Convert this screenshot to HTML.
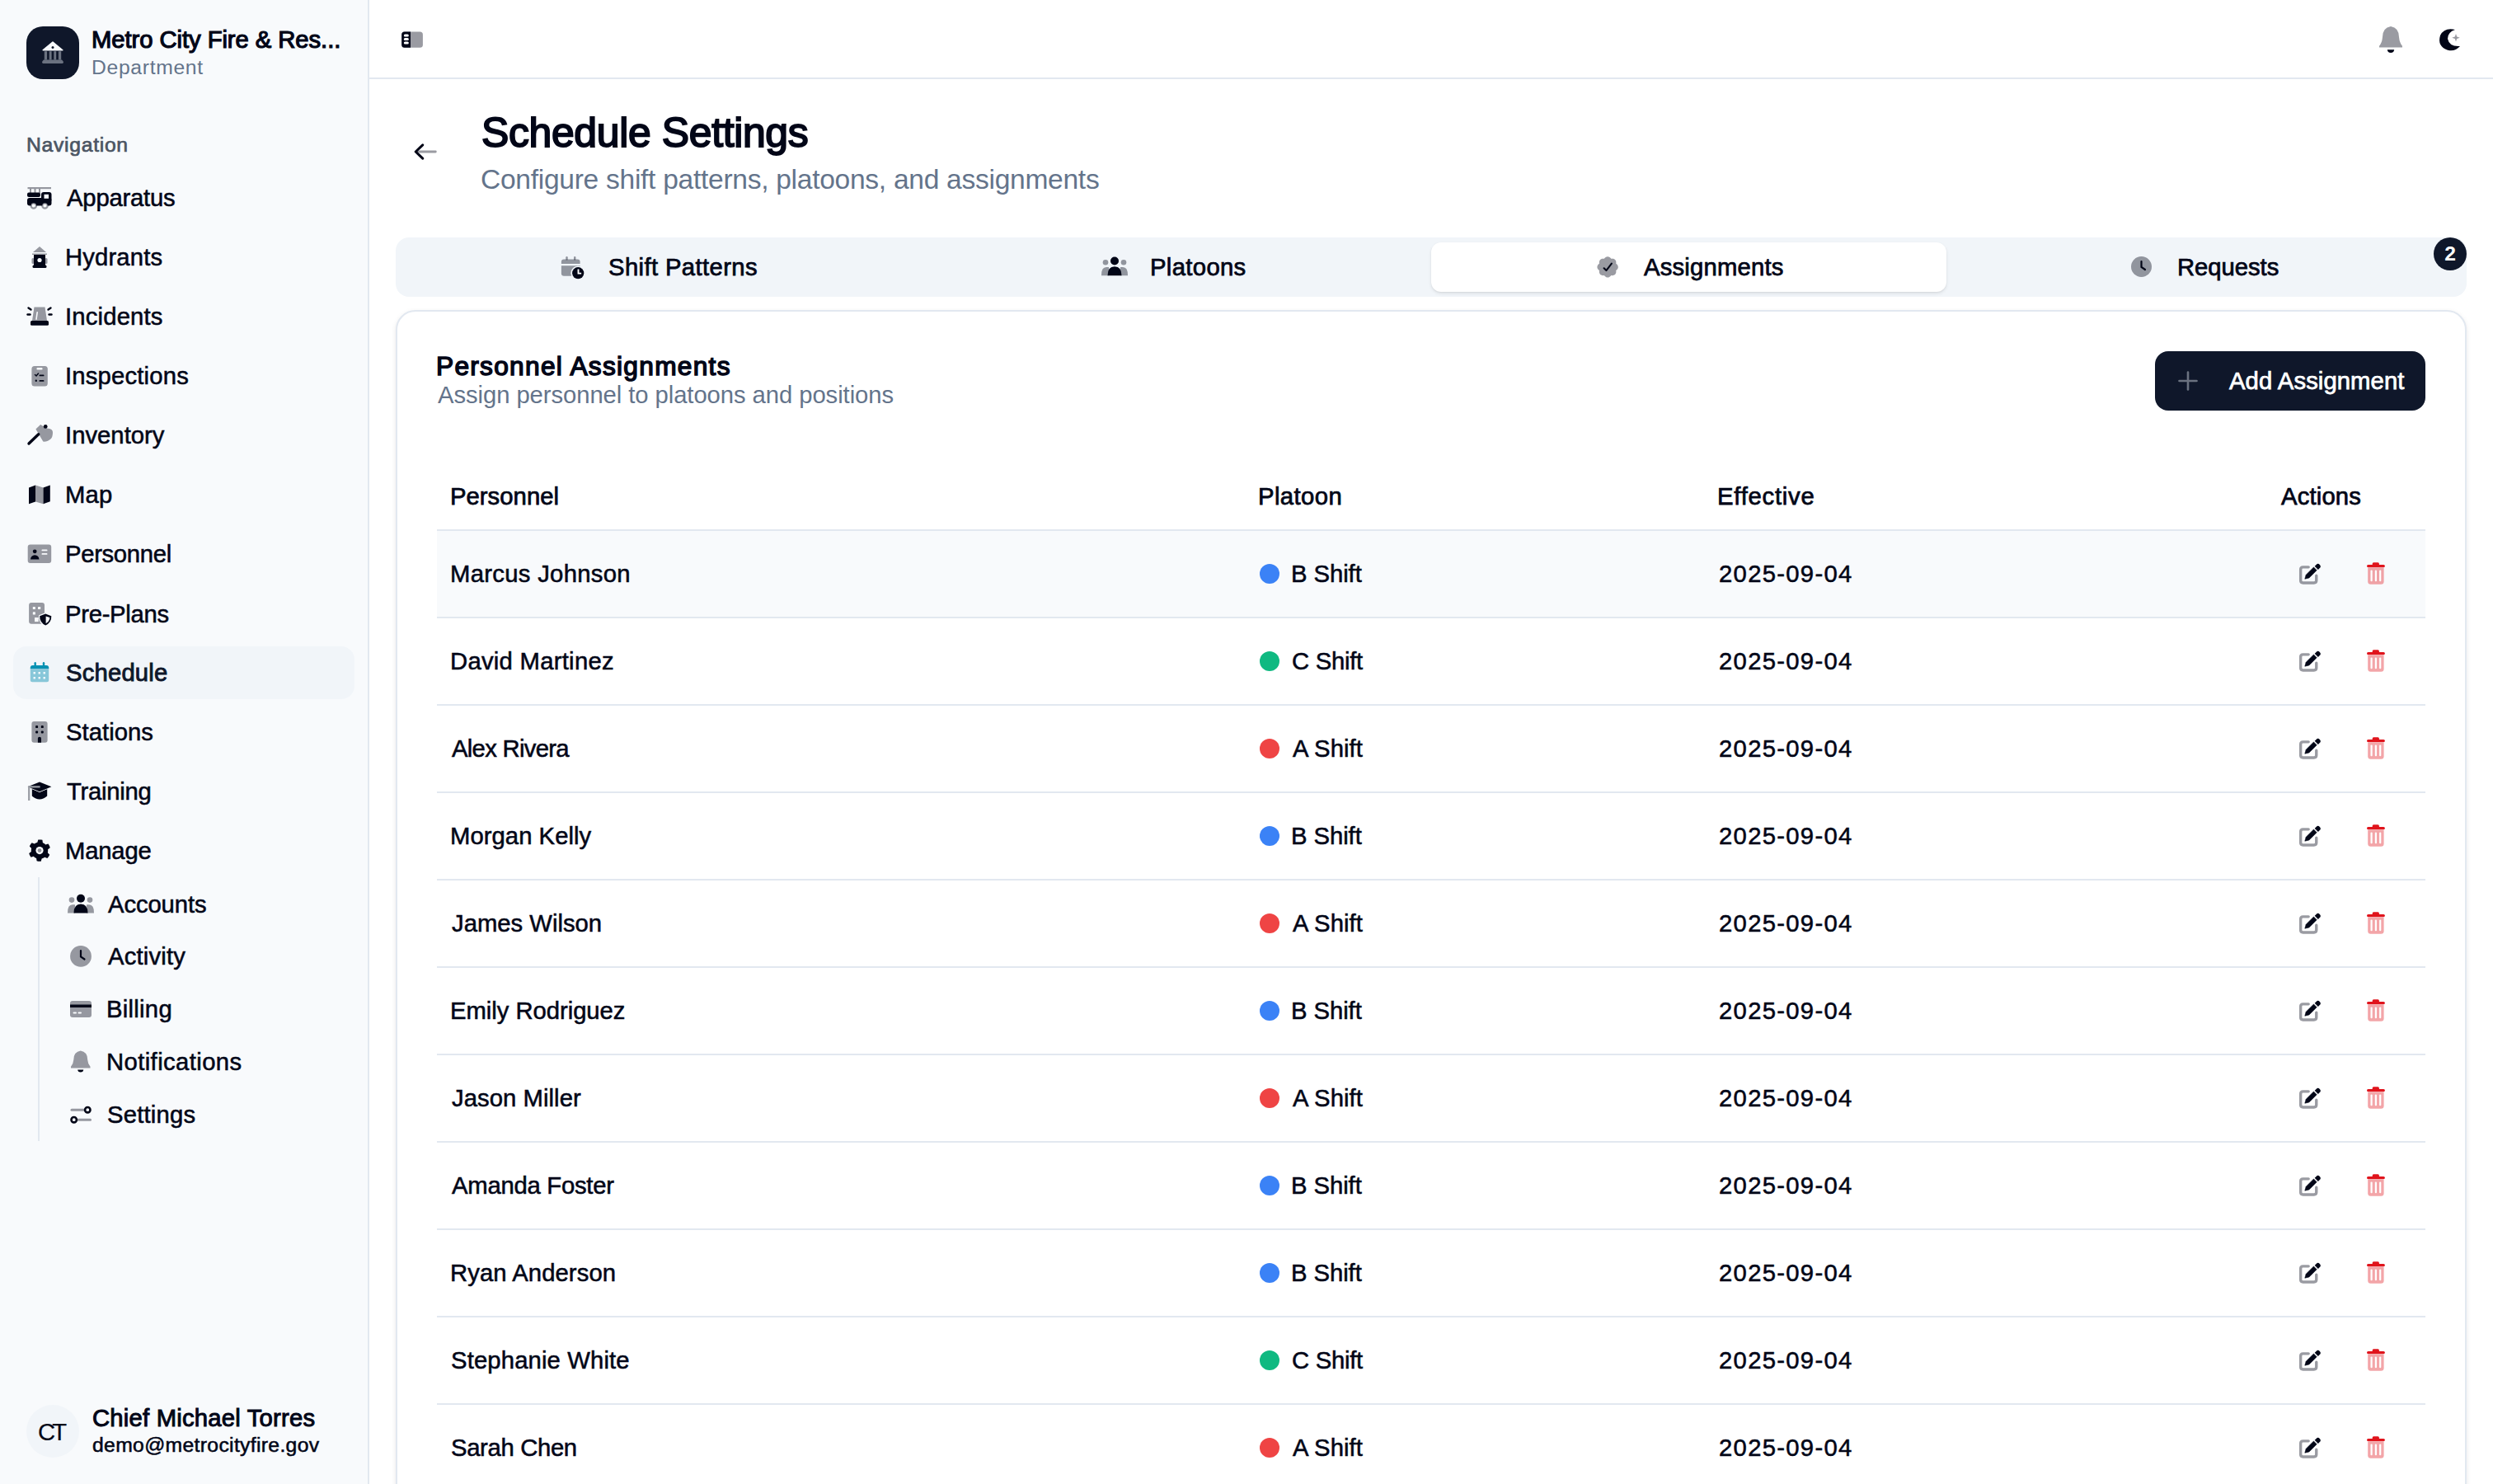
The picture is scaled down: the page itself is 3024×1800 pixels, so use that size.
<!DOCTYPE html>
<html><head><meta charset='utf-8'><title>Schedule Settings</title>
<style>
html,body{margin:0;padding:0;background:#ffffff;}
body{width:3024px;height:1800px;overflow:hidden;position:relative;font-family:"Liberation Sans",sans-serif;}
.t{position:absolute;white-space:nowrap;}
.sb{position:absolute;left:0;top:0;width:446px;height:1800px;background:#f8fafc;border-right:2px solid #e2e8f0;}
.topline{position:absolute;left:448px;top:94px;width:2576px;height:2px;background:#e2e8f0;}
.logo{position:absolute;left:32px;top:32px;width:64px;height:64px;border-radius:20px;background:#0f172a;}
.active{position:absolute;left:16px;top:784px;width:414px;height:64px;border-radius:16px;background:#f1f5f9;}
.avatar{position:absolute;left:32px;top:1704px;width:64px;height:64px;border-radius:50%;background:#f1f5f9;}
.tabbar{position:absolute;left:480px;top:288px;width:2512px;height:72px;border-radius:16px;background:#f1f5f9;}
.tabact{position:absolute;left:1736px;top:294px;width:625px;height:60px;border-radius:12px;background:#ffffff;box-shadow:0 2px 4px rgba(0,0,0,0.08),0 1px 2px rgba(0,0,0,0.06);}
.card{position:absolute;left:480px;top:376px;width:2508px;height:1500px;border:2px solid #e2e8f0;border-radius:24px;background:#ffffff;box-shadow:0 2px 6px rgba(0,0,0,0.08),0 2px 4px -2px rgba(0,0,0,0.08);}
.btn{position:absolute;left:2614px;top:426px;width:328px;height:72px;border-radius:16px;background:#0f172a;}
.hover{position:absolute;left:530px;top:643.6px;width:2412px;height:104px;background:#f8fafc;}
.hl{position:absolute;left:530px;width:2412px;height:2px;background:#e2e8f0;}
.ov{position:absolute;left:0;top:0;}
</style></head><body>
<div class='sb'></div>
<div class='topline'></div>
<div class='logo'></div>
<div class='active'></div>
<div class='avatar'></div>
<div class='tabbar'></div>
<div class='tabact'></div>
<div class='card'></div>
<div class='hover'></div>
<div class='hl' style='top:641.6px'></div><div class='hl' style='top:747.6px'></div><div class='hl' style='top:853.6px'></div><div class='hl' style='top:959.6px'></div><div class='hl' style='top:1065.6px'></div><div class='hl' style='top:1171.6px'></div><div class='hl' style='top:1277.6px'></div><div class='hl' style='top:1383.6px'></div><div class='hl' style='top:1489.6px'></div><div class='hl' style='top:1595.6px'></div><div class='hl' style='top:1701.6px'></div><div class='hl' style='top:1807.6px'></div>
<div class='btn'></div>
<svg class='ov' width='3024' height='1800' viewBox='0 0 3024 1800'><path d='M52.2 60.8 L64 51.2 L75.8 60.8 Z' fill='#f8fafc' stroke='#f8fafc' stroke-width='1.6' stroke-linejoin='round'/><circle cx='64' cy='57.6' r='1.5' fill='#0f172a' /><rect x='53.8' y='62.2' width='3.3' height='10.4' rx='0' fill='#6b7280' /><rect x='59.7' y='62.2' width='2.9' height='10.4' rx='0' fill='#6b7280' /><rect x='65.3' y='62.2' width='2.9' height='10.4' rx='0' fill='#6b7280' /><rect x='70.9' y='62.2' width='3.3' height='10.4' rx='0' fill='#6b7280' /><path d='M53 72.6 L75 72.6 Q77 74.5 77 75.6 Q77 77 75.6 77 L52.4 77 Q51 77 51 75.6 Q51 74.5 53 72.6 Z' fill='#6b7280' /><rect x='33.5' y='227' width='28.5' height='2.2' rx='0' fill='rgba(2,6,23,0.4)' /><rect x='36' y='229' width='2' height='5' rx='0' fill='rgba(2,6,23,0.4)' /><rect x='41.5' y='229' width='2' height='5' rx='0' fill='rgba(2,6,23,0.4)' /><rect x='47' y='229' width='2' height='5' rx='0' fill='rgba(2,6,23,0.4)' /><rect x='33' y='233.5' width='16' height='5.5' rx='2' fill='#020617' /><rect x='33' y='240' width='29.5' height='9.5' rx='3' fill='#020617' /><rect x='50' y='233' width='12.5' height='12' rx='3' fill='#020617' /><rect x='53.5' y='235.8' width='5.5' height='5' rx='0' fill='#f8fafc' /><circle cx='40.8' cy='249.5' r='3.2' fill='#f8fafc' stroke='rgba(2,6,23,0.4)' stroke-width='2.2'/><circle cx='54.5' cy='249.5' r='3.2' fill='#f8fafc' stroke='rgba(2,6,23,0.4)' stroke-width='2.2'/><path d='M48 299 L56 306 L40 306 Z' fill='rgba(2,6,23,0.4)' /><rect x='39' y='307.5' width='18' height='1.5' rx='0' fill='rgba(2,6,23,0.4)' /><rect x='38.5' y='313' width='3' height='7' rx='1.5' fill='rgba(2,6,23,0.4)' /><rect x='54.5' y='313' width='3' height='7' rx='1.5' fill='rgba(2,6,23,0.4)' /><rect x='41' y='309' width='14' height='13.5' rx='0' fill='#020617' /><rect x='39.5' y='321.5' width='17' height='3.5' rx='1.5' fill='#020617' /><circle cx='48' cy='315.5' r='2.6' fill='#f8fafc' /><path d='M41.5 372.6 L54.5 372.6 L57 389 L39 389 Z' fill='rgba(2,6,23,0.4)' stroke-linejoin='round'/><rect x='43.8' y='378' width='1.6' height='10' rx='0.8' fill='#f8fafc' transform='rotate(8 44.6 383)'/><rect x='37' y='389' width='22' height='5.8' rx='1.5' fill='#020617' /><g stroke='#020617' stroke-width='2.4' stroke-linecap='round'><line x1='33.5' y1='381.5' x2='36.5' y2='381.5'/><line x1='59.5' y1='381.5' x2='62.5' y2='381.5'/><line x1='34.5' y1='373.5' x2='37.5' y2='375.5'/><line x1='61.5' y1='373.5' x2='58.5' y2='375.5'/></g><rect x='38.4' y='444' width='19.4' height='24.6' rx='3.5' fill='rgba(2,6,23,0.4)' /><rect x='44.5' y='446' width='7' height='2.5' rx='1.2' fill='#f8fafc' /><path d='M42.5 454.5 L44 456 L46.5 453' fill='none' stroke='#020617' stroke-width='1.5' stroke-linecap='round'/><rect x='47.5' y='454.5' width='6' height='1.8' rx='0.9' fill='#020617' /><rect x='47.5' y='461' width='6' height='1.8' rx='0.9' fill='#020617' /><circle cx='43.8' cy='461.8' r='1.2' fill='#020617' /><path d='M43.4 520.6 L49.1 515 L56.8 519.4 Q64.5 519.5 64 525 Q63.8 530 62 532 Q58 536 52.3 535.6 L47.9 527.9 Z' fill='rgba(2,6,23,0.4)' /><line x1='35' y1='538' x2='46.7' y2='526.7' stroke='#020617' stroke-width='3.4' stroke-linecap='round'/><circle cx='55.2' cy='517.4' r='2.4' fill='#020617' /><path d='M35 591.5 L43 588.5 L43 608.5 L35 611.2 Z' fill='#020617' /><path d='M43 588.5 L52.5 591.5 L52.5 611.2 L43 608.5 Z' fill='rgba(2,6,23,0.4)' /><path d='M52.5 591.5 L60.8 588.5 L60.8 608.2 L52.5 611.2 Z' fill='#020617' /><rect x='33.7' y='660.6' width='28.5' height='22.4' rx='3' fill='rgba(2,6,23,0.4)' /><circle cx='42.2' cy='668.8' r='2.4' fill='#020617' /><path d='M37 678.4 Q37.5 673.5 42.2 673.2 Q47 673.5 47.5 678.4 Z' fill='#020617' /><rect x='50.5' y='666.5' width='7' height='1.8' rx='0.9' fill='#f8fafc' /><rect x='50.5' y='671' width='7' height='1.8' rx='0.9' fill='#f8fafc' /><rect x='35.1' y='731.1' width='18.9' height='25.7' rx='3' fill='rgba(2,6,23,0.4)' /><rect x='39.8' y='736' width='3.1' height='3' rx='0.6' fill='#f8fafc' /><rect x='46' y='736' width='3.2' height='3' rx='0.6' fill='#f8fafc' /><rect x='39.8' y='742.3' width='3.1' height='3.2' rx='0.6' fill='#f8fafc' /><rect x='42' y='749' width='4.7' height='5.1' rx='0' fill='#f8fafc' /><path d='M55.25 744.5 L62.3 747.2 Q62.6 754.8 55.25 758.6 Q47.9 754.8 48.2 747.2 Z' fill='#020617' stroke='#f8fafc' stroke-width='2.6' stroke-linejoin='round' paint-order='stroke'/><path d='M55.6 747.4 L60.4 749.1 Q60.2 754 55.6 756.2 Z' fill='#f8fafc' /><rect x='36.8' y='807' width='22.4' height='20.2' rx='2.5' fill='rgba(8,145,178,0.45)' /><path d='M36.8 810.5 Q36.8 807 40 807 L56 807 Q59.2 807 59.2 810.5 L59.2 811 L36.8 811 Z' fill='#0891b2' /><rect x='41.5' y='803' width='2.4' height='5' rx='1.2' fill='#0891b2' /><rect x='51.8' y='803' width='2.4' height='5' rx='1.2' fill='#0891b2' /><rect x='40.5' y='815' width='2.5' height='2.5' rx='0' fill='#eef7fb' /><rect x='46.5' y='815' width='2.5' height='2.5' rx='0' fill='#eef7fb' /><rect x='52.5' y='815' width='2.5' height='2.5' rx='0' fill='#eef7fb' /><rect x='40.5' y='821' width='2.5' height='2.5' rx='0' fill='#eef7fb' /><rect x='46.5' y='821' width='2.5' height='2.5' rx='0' fill='#eef7fb' /><rect x='52.5' y='821' width='2.5' height='2.5' rx='0' fill='#eef7fb' /><rect x='38.4' y='875' width='19.2' height='25.7' rx='3' fill='rgba(2,6,23,0.4)' /><rect x='43.1' y='880.1' width='3' height='3' rx='0.9' fill='#020617' /><rect x='43.1' y='886.5' width='3' height='3' rx='0.9' fill='#020617' /><rect x='49.8' y='880.1' width='3' height='3' rx='0.9' fill='#020617' /><rect x='49.8' y='886.5' width='3' height='3' rx='0.9' fill='#020617' /><path d='M45.9 900.7 L45.9 895.8 Q45.9 893.7 47.95 893.7 Q50 893.7 50 895.8 L50 900.7 Z' fill='#020617' /><path d='M38.8 957 L48 961 L57.2 957 L57.2 965.5 Q48 973.5 38.8 965.5 Z' fill='#020617' /><path d='M48 948.4 L62.4 954.2 L48 960.2 L33.6 954.2 Z' fill='#020617' stroke='#f8fafc' stroke-width='1.4' stroke-linejoin='round' paint-order='stroke'/><path d='M48.6 954.4 L35.2 954.4 L35.2 971' fill='none' stroke='#9b9ea6' stroke-width='2.3'/><path d='M48.00 1018.40 L49.72 1018.51 L51.42 1018.85 L51.90 1022.18 L53.10 1022.77 L54.21 1023.51 L55.21 1024.39 L58.47 1023.56 L59.43 1025.00 L60.20 1026.55 L60.75 1028.18 L58.11 1030.27 L58.20 1031.60 L58.11 1032.93 L57.85 1034.24 L60.20 1036.65 L59.43 1038.20 L58.47 1039.64 L57.33 1040.93 L54.21 1039.69 L53.10 1040.43 L51.90 1041.02 L50.64 1041.45 L49.72 1044.69 L48.00 1044.80 L46.28 1044.69 L44.58 1044.35 L44.10 1041.02 L42.90 1040.43 L41.79 1039.69 L40.79 1038.81 L37.53 1039.64 L36.57 1038.20 L35.80 1036.65 L35.25 1035.02 L37.89 1032.93 L37.80 1031.60 L37.89 1030.27 L38.15 1028.96 L35.80 1026.55 L36.57 1025.00 L37.53 1023.56 L38.67 1022.27 L41.79 1023.51 L42.90 1022.77 L44.10 1022.18 L45.36 1021.75 L46.28 1018.51 Z' fill='#020617' stroke-linejoin='round'/><circle cx='48' cy='1031.6' r='4.6' fill='#f8fafc' /><circle cx='48' cy='1031.6' r='2.4' fill='rgba(2,6,23,0.4)' /><rect x='46' y='1064' width='2' height='320' rx='0' fill='#e2e8f0' /><circle cx='87.0' cy='1091.6' r='3.3' fill='rgba(2,6,23,0.4)' /><circle cx='109.0' cy='1091.6' r='3.3' fill='rgba(2,6,23,0.4)' /><path d='M82.0 1107.6 Q81.8 1097.3 88.0 1097.3 L91.0 1097.3 L91.0 1107.6 Z' fill='rgba(2,6,23,0.4)' /><path d='M114.0 1107.6 Q114.2 1097.3 108.0 1097.3 L105.0 1097.3 L105.0 1107.6 Z' fill='rgba(2,6,23,0.4)' /><circle cx='98' cy='1089.8' r='5.0' fill='#020617' /><path d='M89.5 1107.6 Q89.5 1096.6 98 1096.6 Q106.5 1096.6 106.5 1107.6 Z' fill='#020617' /><circle cx='98' cy='1159.9' r='12.9' fill='rgba(2,6,23,0.4)' /><path d='M98 1153 L98 1160.5 L102.5 1163.5' fill='none' stroke='#020617' stroke-width='2.2' stroke-linecap='round'/><rect x='85' y='1214' width='26' height='20' rx='3' fill='rgba(2,6,23,0.4)' /><rect x='85' y='1218.5' width='26' height='3.5' rx='0' fill='#020617' /><rect x='88.5' y='1227.5' width='4.5' height='2' rx='1' fill='#f8fafc' /><rect x='94.5' y='1227.5' width='4.5' height='2' rx='1' fill='#f8fafc' /><path d='M97.75 1274.6 Q106.21 1275.8999999999999 106.21 1285.52 Q106.68 1290.7199999999998 109.5 1293.84 L109.5 1295.3999999999999 L86 1295.3999999999999 L86 1293.84 Q88.82 1290.7199999999998 89.29 1285.52 Q89.29 1275.8999999999999 97.75 1274.6 Z' fill='rgba(2,6,23,0.4)' stroke-linejoin='round'/><path d='M94.225 1297.61 L101.275 1297.61 Q101.04 1300.6 97.75 1300.6 Q94.46 1300.6 94.225 1297.61 Z' fill='#020617' /><g fill='none' stroke-linecap='round'><line x1='87' y1='1346.3' x2='101.5' y2='1346.3' stroke='rgba(2,6,23,0.4)' stroke-width='3'/><line x1='95' y1='1358.3' x2='109.5' y2='1358.3' stroke='rgba(2,6,23,0.4)' stroke-width='3'/><circle cx='106.3' cy='1346.2' r='3.2' stroke='#020617' stroke-width='2.6' fill='#f8fafc'/><circle cx='89.7' cy='1358.2' r='3.2' stroke='#020617' stroke-width='2.6' fill='#f8fafc'/></g><rect x='487.2' y='38.4' width='25.7' height='19.4' rx='3.5' fill='rgba(2,6,23,0.4)' /><path d='M490.7 38.4 L498 38.4 L498 57.8 L490.7 57.8 Q487.2 57.8 487.2 54.3 L487.2 41.9 Q487.2 38.4 490.7 38.4 Z' fill='#020617' /><rect x='489.8' y='41.5' width='6' height='3' rx='1.5' fill='#ffffff' /><rect x='489.8' y='46' width='6' height='3' rx='1.5' fill='#ffffff' /><rect x='489.8' y='50.5' width='6' height='3' rx='1.5' fill='#ffffff' /><path d='M2900.0 32 Q2910.08 33.6 2910.08 45.44 Q2910.64 51.84 2914 55.68 L2914 57.6 L2886 57.6 L2886 55.68 Q2889.36 51.84 2889.92 45.44 Q2889.92 33.6 2900.0 32 Z' fill='rgba(2,6,23,0.4)' stroke-linejoin='round'/><path d='M2895.8 60.32 L2904.2 60.32 Q2903.92 64.0 2900.0 64.0 Q2896.08 64.0 2895.8 60.32 Z' fill='#020617' /><path d='M2978 36 Q2965 33 2960 43 Q2956 56 2969 60.8 Q2978 63 2984 56 Q2971 57 2969 47 Q2969 39 2978 36 Z' fill='#020617' /><path d='M2979 41 L2980.2 44.6 L2983.8 45.8 L2980.2 47 L2979 50.6 L2977.8 47 L2974.2 45.8 L2977.8 44.6 Z' fill='rgba(2,6,23,0.4)' /><line x1='507' y1='184' x2='528.3' y2='184' stroke='rgba(2,6,23,0.4)' stroke-width='2.9' stroke-linecap='round'/><path d='M512.7 175.8 L504.2 184 L512.7 192.2' fill='none' stroke='#020617' stroke-width='3.0' stroke-linecap='round' stroke-linejoin='round'/><path d='M680.9 319.9 L680.9 317.6 Q680.9 314.4 684.1 314.4 L700.4 314.4 Q703.6 314.4 703.6 317.6 L703.6 319.9 Z' fill='rgba(2,6,23,0.4)' /><path d='M680.9 322.3 L703.6 322.3 L703.6 334.7 L684.1 334.7 Q680.9 334.7 680.9 331.5 Z' fill='rgba(2,6,23,0.4)' /><rect x='686.3' y='311.1' width='2.4' height='4.5' rx='1.2' fill='rgba(2,6,23,0.4)' /><rect x='696' y='311.1' width='2.4' height='4.5' rx='1.2' fill='rgba(2,6,23,0.4)' /><circle cx='701.2' cy='331.2' r='8.8' fill='#f1f5f9' /><circle cx='701.2' cy='331.2' r='7.1' fill='#020617' /><path d='M701.5 327.4 L701.5 331.6 L704.2 331.6' fill='none' stroke='#ffffff' stroke-width='1.9' stroke-linecap='square'/><circle cx='1341.0' cy='318.3' r='3.3' fill='rgba(2,6,23,0.4)' /><circle cx='1363.0' cy='318.3' r='3.3' fill='rgba(2,6,23,0.4)' /><path d='M1336.0 334.3 Q1335.8 324.0 1342.0 324.0 L1345.0 324.0 L1345.0 334.3 Z' fill='rgba(2,6,23,0.4)' /><path d='M1368.0 334.3 Q1368.2 324.0 1362.0 324.0 L1359.0 324.0 L1359.0 334.3 Z' fill='rgba(2,6,23,0.4)' /><circle cx='1352' cy='316.5' r='5.0' fill='#020617' /><path d='M1343.5 334.3 Q1343.5 323.3 1352 323.3 Q1360.5 323.3 1360.5 334.3 Z' fill='#020617' /><path d='M1950.10 311.20 L1951.33 311.39 L1952.48 311.93 L1953.48 312.75 L1954.31 313.74 L1955.59 313.63 L1956.88 313.75 L1958.07 314.18 L1959.08 314.92 L1959.82 315.93 L1960.25 317.12 L1960.37 318.41 L1960.26 319.69 L1961.25 320.52 L1962.07 321.52 L1962.61 322.67 L1962.80 323.90 L1962.61 325.13 L1962.07 326.28 L1961.25 327.28 L1960.26 328.11 L1960.37 329.39 L1960.25 330.68 L1959.82 331.87 L1959.08 332.88 L1958.07 333.62 L1956.88 334.05 L1955.59 334.17 L1954.31 334.06 L1953.48 335.05 L1952.48 335.87 L1951.33 336.41 L1950.10 336.60 L1948.87 336.41 L1947.72 335.87 L1946.72 335.05 L1945.89 334.06 L1944.61 334.17 L1943.32 334.05 L1942.13 333.62 L1941.12 332.88 L1940.38 331.87 L1939.95 330.68 L1939.83 329.39 L1939.94 328.11 L1938.95 327.28 L1938.13 326.28 L1937.59 325.13 L1937.40 323.90 L1937.59 322.67 L1938.13 321.52 L1938.95 320.52 L1939.94 319.69 L1939.83 318.41 L1939.95 317.12 L1940.38 315.93 L1941.12 314.92 L1942.13 314.18 L1943.32 313.75 L1944.61 313.63 L1945.89 313.74 L1946.72 312.75 L1947.72 311.93 L1948.87 311.39 Z' fill='rgba(2,6,23,0.4)' /><path d='M1945.6 325.3 L1948.4 328.1 L1954.9 319.6' fill='none' stroke='#020617' stroke-width='2.1' stroke-linecap='round' stroke-linejoin='round'/><circle cx='2597.5' cy='323.5' r='12.5' fill='rgba(2,6,23,0.4)' /><path d='M2597.5 317 L2597.5 324 L2602 327' fill='none' stroke='#020617' stroke-width='2.2' stroke-linecap='round'/><circle cx='2972' cy='308' r='20' fill='#0f172a' /><g stroke='#6b7280' stroke-width='2.6' stroke-linecap='round'><line x1='2654' y1='451.5' x2='2654' y2='472.5'/><line x1='2643.5' y1='462' x2='2664.5' y2='462'/></g><circle cx='1540' cy='696' r='12' fill='#3b82f6' /><g transform='translate(0 0)'><path d='M2800.2 687.85 L2793.6 687.85 Q2790.65 687.85 2790.65 690.8 L2790.65 704 Q2790.65 706.95 2793.6 706.95 L2806.8 706.95 Q2809.75 706.95 2809.75 704 L2809.75 698.3' fill='none' stroke='rgba(2,6,23,0.4)' stroke-width='3.4' stroke-linecap='round'/><path d='M2795.8 702.2 L2797.2 697.3 L2806.5 688 L2810.2 691.7 L2800.9 701 Z' fill='#020617' stroke='#020617' stroke-width='0.6' stroke-linejoin='round'/><path d='M2807.7 686.8 L2809.6 684.9 Q2811.7 682.8 2813.8 684.9 Q2815.9 687 2813.8 689.1 L2811.9 691 Z' fill='#020617'/><path d='M2872.2 688.7 L2891.6 688.7 L2891.6 705.2 Q2891.6 708.7 2888.1 708.7 L2875.7 708.7 Q2872.2 708.7 2872.2 705.2 Z' fill='rgba(225,29,38,0.4)' stroke='rgba(225,29,38,0.4)' stroke-width='0'/><rect x='2871' y='684.9' width='21.9' height='3.3' rx='1.6' fill='#e0141c'/><rect x='2877.7' y='682.2' width='8.2' height='3.5' rx='1.5' fill='#e0141c'/><rect x='2875.5' y='691.4' width='2.2' height='13.9' rx='1.1' fill='#fff'/><rect x='2880.8' y='691.4' width='2.2' height='13.9' rx='1.1' fill='#fff'/><rect x='2886.1' y='691.4' width='2.2' height='13.9' rx='1.1' fill='#fff'/></g><circle cx='1540' cy='802' r='12' fill='#10b981' /><g transform='translate(0 106)'><path d='M2800.2 687.85 L2793.6 687.85 Q2790.65 687.85 2790.65 690.8 L2790.65 704 Q2790.65 706.95 2793.6 706.95 L2806.8 706.95 Q2809.75 706.95 2809.75 704 L2809.75 698.3' fill='none' stroke='rgba(2,6,23,0.4)' stroke-width='3.4' stroke-linecap='round'/><path d='M2795.8 702.2 L2797.2 697.3 L2806.5 688 L2810.2 691.7 L2800.9 701 Z' fill='#020617' stroke='#020617' stroke-width='0.6' stroke-linejoin='round'/><path d='M2807.7 686.8 L2809.6 684.9 Q2811.7 682.8 2813.8 684.9 Q2815.9 687 2813.8 689.1 L2811.9 691 Z' fill='#020617'/><path d='M2872.2 688.7 L2891.6 688.7 L2891.6 705.2 Q2891.6 708.7 2888.1 708.7 L2875.7 708.7 Q2872.2 708.7 2872.2 705.2 Z' fill='rgba(225,29,38,0.4)' stroke='rgba(225,29,38,0.4)' stroke-width='0'/><rect x='2871' y='684.9' width='21.9' height='3.3' rx='1.6' fill='#e0141c'/><rect x='2877.7' y='682.2' width='8.2' height='3.5' rx='1.5' fill='#e0141c'/><rect x='2875.5' y='691.4' width='2.2' height='13.9' rx='1.1' fill='#fff'/><rect x='2880.8' y='691.4' width='2.2' height='13.9' rx='1.1' fill='#fff'/><rect x='2886.1' y='691.4' width='2.2' height='13.9' rx='1.1' fill='#fff'/></g><circle cx='1540' cy='908' r='12' fill='#ef4444' /><g transform='translate(0 212)'><path d='M2800.2 687.85 L2793.6 687.85 Q2790.65 687.85 2790.65 690.8 L2790.65 704 Q2790.65 706.95 2793.6 706.95 L2806.8 706.95 Q2809.75 706.95 2809.75 704 L2809.75 698.3' fill='none' stroke='rgba(2,6,23,0.4)' stroke-width='3.4' stroke-linecap='round'/><path d='M2795.8 702.2 L2797.2 697.3 L2806.5 688 L2810.2 691.7 L2800.9 701 Z' fill='#020617' stroke='#020617' stroke-width='0.6' stroke-linejoin='round'/><path d='M2807.7 686.8 L2809.6 684.9 Q2811.7 682.8 2813.8 684.9 Q2815.9 687 2813.8 689.1 L2811.9 691 Z' fill='#020617'/><path d='M2872.2 688.7 L2891.6 688.7 L2891.6 705.2 Q2891.6 708.7 2888.1 708.7 L2875.7 708.7 Q2872.2 708.7 2872.2 705.2 Z' fill='rgba(225,29,38,0.4)' stroke='rgba(225,29,38,0.4)' stroke-width='0'/><rect x='2871' y='684.9' width='21.9' height='3.3' rx='1.6' fill='#e0141c'/><rect x='2877.7' y='682.2' width='8.2' height='3.5' rx='1.5' fill='#e0141c'/><rect x='2875.5' y='691.4' width='2.2' height='13.9' rx='1.1' fill='#fff'/><rect x='2880.8' y='691.4' width='2.2' height='13.9' rx='1.1' fill='#fff'/><rect x='2886.1' y='691.4' width='2.2' height='13.9' rx='1.1' fill='#fff'/></g><circle cx='1540' cy='1014' r='12' fill='#3b82f6' /><g transform='translate(0 318)'><path d='M2800.2 687.85 L2793.6 687.85 Q2790.65 687.85 2790.65 690.8 L2790.65 704 Q2790.65 706.95 2793.6 706.95 L2806.8 706.95 Q2809.75 706.95 2809.75 704 L2809.75 698.3' fill='none' stroke='rgba(2,6,23,0.4)' stroke-width='3.4' stroke-linecap='round'/><path d='M2795.8 702.2 L2797.2 697.3 L2806.5 688 L2810.2 691.7 L2800.9 701 Z' fill='#020617' stroke='#020617' stroke-width='0.6' stroke-linejoin='round'/><path d='M2807.7 686.8 L2809.6 684.9 Q2811.7 682.8 2813.8 684.9 Q2815.9 687 2813.8 689.1 L2811.9 691 Z' fill='#020617'/><path d='M2872.2 688.7 L2891.6 688.7 L2891.6 705.2 Q2891.6 708.7 2888.1 708.7 L2875.7 708.7 Q2872.2 708.7 2872.2 705.2 Z' fill='rgba(225,29,38,0.4)' stroke='rgba(225,29,38,0.4)' stroke-width='0'/><rect x='2871' y='684.9' width='21.9' height='3.3' rx='1.6' fill='#e0141c'/><rect x='2877.7' y='682.2' width='8.2' height='3.5' rx='1.5' fill='#e0141c'/><rect x='2875.5' y='691.4' width='2.2' height='13.9' rx='1.1' fill='#fff'/><rect x='2880.8' y='691.4' width='2.2' height='13.9' rx='1.1' fill='#fff'/><rect x='2886.1' y='691.4' width='2.2' height='13.9' rx='1.1' fill='#fff'/></g><circle cx='1540' cy='1120' r='12' fill='#ef4444' /><g transform='translate(0 424)'><path d='M2800.2 687.85 L2793.6 687.85 Q2790.65 687.85 2790.65 690.8 L2790.65 704 Q2790.65 706.95 2793.6 706.95 L2806.8 706.95 Q2809.75 706.95 2809.75 704 L2809.75 698.3' fill='none' stroke='rgba(2,6,23,0.4)' stroke-width='3.4' stroke-linecap='round'/><path d='M2795.8 702.2 L2797.2 697.3 L2806.5 688 L2810.2 691.7 L2800.9 701 Z' fill='#020617' stroke='#020617' stroke-width='0.6' stroke-linejoin='round'/><path d='M2807.7 686.8 L2809.6 684.9 Q2811.7 682.8 2813.8 684.9 Q2815.9 687 2813.8 689.1 L2811.9 691 Z' fill='#020617'/><path d='M2872.2 688.7 L2891.6 688.7 L2891.6 705.2 Q2891.6 708.7 2888.1 708.7 L2875.7 708.7 Q2872.2 708.7 2872.2 705.2 Z' fill='rgba(225,29,38,0.4)' stroke='rgba(225,29,38,0.4)' stroke-width='0'/><rect x='2871' y='684.9' width='21.9' height='3.3' rx='1.6' fill='#e0141c'/><rect x='2877.7' y='682.2' width='8.2' height='3.5' rx='1.5' fill='#e0141c'/><rect x='2875.5' y='691.4' width='2.2' height='13.9' rx='1.1' fill='#fff'/><rect x='2880.8' y='691.4' width='2.2' height='13.9' rx='1.1' fill='#fff'/><rect x='2886.1' y='691.4' width='2.2' height='13.9' rx='1.1' fill='#fff'/></g><circle cx='1540' cy='1226' r='12' fill='#3b82f6' /><g transform='translate(0 530)'><path d='M2800.2 687.85 L2793.6 687.85 Q2790.65 687.85 2790.65 690.8 L2790.65 704 Q2790.65 706.95 2793.6 706.95 L2806.8 706.95 Q2809.75 706.95 2809.75 704 L2809.75 698.3' fill='none' stroke='rgba(2,6,23,0.4)' stroke-width='3.4' stroke-linecap='round'/><path d='M2795.8 702.2 L2797.2 697.3 L2806.5 688 L2810.2 691.7 L2800.9 701 Z' fill='#020617' stroke='#020617' stroke-width='0.6' stroke-linejoin='round'/><path d='M2807.7 686.8 L2809.6 684.9 Q2811.7 682.8 2813.8 684.9 Q2815.9 687 2813.8 689.1 L2811.9 691 Z' fill='#020617'/><path d='M2872.2 688.7 L2891.6 688.7 L2891.6 705.2 Q2891.6 708.7 2888.1 708.7 L2875.7 708.7 Q2872.2 708.7 2872.2 705.2 Z' fill='rgba(225,29,38,0.4)' stroke='rgba(225,29,38,0.4)' stroke-width='0'/><rect x='2871' y='684.9' width='21.9' height='3.3' rx='1.6' fill='#e0141c'/><rect x='2877.7' y='682.2' width='8.2' height='3.5' rx='1.5' fill='#e0141c'/><rect x='2875.5' y='691.4' width='2.2' height='13.9' rx='1.1' fill='#fff'/><rect x='2880.8' y='691.4' width='2.2' height='13.9' rx='1.1' fill='#fff'/><rect x='2886.1' y='691.4' width='2.2' height='13.9' rx='1.1' fill='#fff'/></g><circle cx='1540' cy='1332' r='12' fill='#ef4444' /><g transform='translate(0 636)'><path d='M2800.2 687.85 L2793.6 687.85 Q2790.65 687.85 2790.65 690.8 L2790.65 704 Q2790.65 706.95 2793.6 706.95 L2806.8 706.95 Q2809.75 706.95 2809.75 704 L2809.75 698.3' fill='none' stroke='rgba(2,6,23,0.4)' stroke-width='3.4' stroke-linecap='round'/><path d='M2795.8 702.2 L2797.2 697.3 L2806.5 688 L2810.2 691.7 L2800.9 701 Z' fill='#020617' stroke='#020617' stroke-width='0.6' stroke-linejoin='round'/><path d='M2807.7 686.8 L2809.6 684.9 Q2811.7 682.8 2813.8 684.9 Q2815.9 687 2813.8 689.1 L2811.9 691 Z' fill='#020617'/><path d='M2872.2 688.7 L2891.6 688.7 L2891.6 705.2 Q2891.6 708.7 2888.1 708.7 L2875.7 708.7 Q2872.2 708.7 2872.2 705.2 Z' fill='rgba(225,29,38,0.4)' stroke='rgba(225,29,38,0.4)' stroke-width='0'/><rect x='2871' y='684.9' width='21.9' height='3.3' rx='1.6' fill='#e0141c'/><rect x='2877.7' y='682.2' width='8.2' height='3.5' rx='1.5' fill='#e0141c'/><rect x='2875.5' y='691.4' width='2.2' height='13.9' rx='1.1' fill='#fff'/><rect x='2880.8' y='691.4' width='2.2' height='13.9' rx='1.1' fill='#fff'/><rect x='2886.1' y='691.4' width='2.2' height='13.9' rx='1.1' fill='#fff'/></g><circle cx='1540' cy='1438' r='12' fill='#3b82f6' /><g transform='translate(0 742)'><path d='M2800.2 687.85 L2793.6 687.85 Q2790.65 687.85 2790.65 690.8 L2790.65 704 Q2790.65 706.95 2793.6 706.95 L2806.8 706.95 Q2809.75 706.95 2809.75 704 L2809.75 698.3' fill='none' stroke='rgba(2,6,23,0.4)' stroke-width='3.4' stroke-linecap='round'/><path d='M2795.8 702.2 L2797.2 697.3 L2806.5 688 L2810.2 691.7 L2800.9 701 Z' fill='#020617' stroke='#020617' stroke-width='0.6' stroke-linejoin='round'/><path d='M2807.7 686.8 L2809.6 684.9 Q2811.7 682.8 2813.8 684.9 Q2815.9 687 2813.8 689.1 L2811.9 691 Z' fill='#020617'/><path d='M2872.2 688.7 L2891.6 688.7 L2891.6 705.2 Q2891.6 708.7 2888.1 708.7 L2875.7 708.7 Q2872.2 708.7 2872.2 705.2 Z' fill='rgba(225,29,38,0.4)' stroke='rgba(225,29,38,0.4)' stroke-width='0'/><rect x='2871' y='684.9' width='21.9' height='3.3' rx='1.6' fill='#e0141c'/><rect x='2877.7' y='682.2' width='8.2' height='3.5' rx='1.5' fill='#e0141c'/><rect x='2875.5' y='691.4' width='2.2' height='13.9' rx='1.1' fill='#fff'/><rect x='2880.8' y='691.4' width='2.2' height='13.9' rx='1.1' fill='#fff'/><rect x='2886.1' y='691.4' width='2.2' height='13.9' rx='1.1' fill='#fff'/></g><circle cx='1540' cy='1544' r='12' fill='#3b82f6' /><g transform='translate(0 848)'><path d='M2800.2 687.85 L2793.6 687.85 Q2790.65 687.85 2790.65 690.8 L2790.65 704 Q2790.65 706.95 2793.6 706.95 L2806.8 706.95 Q2809.75 706.95 2809.75 704 L2809.75 698.3' fill='none' stroke='rgba(2,6,23,0.4)' stroke-width='3.4' stroke-linecap='round'/><path d='M2795.8 702.2 L2797.2 697.3 L2806.5 688 L2810.2 691.7 L2800.9 701 Z' fill='#020617' stroke='#020617' stroke-width='0.6' stroke-linejoin='round'/><path d='M2807.7 686.8 L2809.6 684.9 Q2811.7 682.8 2813.8 684.9 Q2815.9 687 2813.8 689.1 L2811.9 691 Z' fill='#020617'/><path d='M2872.2 688.7 L2891.6 688.7 L2891.6 705.2 Q2891.6 708.7 2888.1 708.7 L2875.7 708.7 Q2872.2 708.7 2872.2 705.2 Z' fill='rgba(225,29,38,0.4)' stroke='rgba(225,29,38,0.4)' stroke-width='0'/><rect x='2871' y='684.9' width='21.9' height='3.3' rx='1.6' fill='#e0141c'/><rect x='2877.7' y='682.2' width='8.2' height='3.5' rx='1.5' fill='#e0141c'/><rect x='2875.5' y='691.4' width='2.2' height='13.9' rx='1.1' fill='#fff'/><rect x='2880.8' y='691.4' width='2.2' height='13.9' rx='1.1' fill='#fff'/><rect x='2886.1' y='691.4' width='2.2' height='13.9' rx='1.1' fill='#fff'/></g><circle cx='1540' cy='1650' r='12' fill='#10b981' /><g transform='translate(0 954)'><path d='M2800.2 687.85 L2793.6 687.85 Q2790.65 687.85 2790.65 690.8 L2790.65 704 Q2790.65 706.95 2793.6 706.95 L2806.8 706.95 Q2809.75 706.95 2809.75 704 L2809.75 698.3' fill='none' stroke='rgba(2,6,23,0.4)' stroke-width='3.4' stroke-linecap='round'/><path d='M2795.8 702.2 L2797.2 697.3 L2806.5 688 L2810.2 691.7 L2800.9 701 Z' fill='#020617' stroke='#020617' stroke-width='0.6' stroke-linejoin='round'/><path d='M2807.7 686.8 L2809.6 684.9 Q2811.7 682.8 2813.8 684.9 Q2815.9 687 2813.8 689.1 L2811.9 691 Z' fill='#020617'/><path d='M2872.2 688.7 L2891.6 688.7 L2891.6 705.2 Q2891.6 708.7 2888.1 708.7 L2875.7 708.7 Q2872.2 708.7 2872.2 705.2 Z' fill='rgba(225,29,38,0.4)' stroke='rgba(225,29,38,0.4)' stroke-width='0'/><rect x='2871' y='684.9' width='21.9' height='3.3' rx='1.6' fill='#e0141c'/><rect x='2877.7' y='682.2' width='8.2' height='3.5' rx='1.5' fill='#e0141c'/><rect x='2875.5' y='691.4' width='2.2' height='13.9' rx='1.1' fill='#fff'/><rect x='2880.8' y='691.4' width='2.2' height='13.9' rx='1.1' fill='#fff'/><rect x='2886.1' y='691.4' width='2.2' height='13.9' rx='1.1' fill='#fff'/></g><circle cx='1540' cy='1756' r='12' fill='#ef4444' /><g transform='translate(0 1060)'><path d='M2800.2 687.85 L2793.6 687.85 Q2790.65 687.85 2790.65 690.8 L2790.65 704 Q2790.65 706.95 2793.6 706.95 L2806.8 706.95 Q2809.75 706.95 2809.75 704 L2809.75 698.3' fill='none' stroke='rgba(2,6,23,0.4)' stroke-width='3.4' stroke-linecap='round'/><path d='M2795.8 702.2 L2797.2 697.3 L2806.5 688 L2810.2 691.7 L2800.9 701 Z' fill='#020617' stroke='#020617' stroke-width='0.6' stroke-linejoin='round'/><path d='M2807.7 686.8 L2809.6 684.9 Q2811.7 682.8 2813.8 684.9 Q2815.9 687 2813.8 689.1 L2811.9 691 Z' fill='#020617'/><path d='M2872.2 688.7 L2891.6 688.7 L2891.6 705.2 Q2891.6 708.7 2888.1 708.7 L2875.7 708.7 Q2872.2 708.7 2872.2 705.2 Z' fill='rgba(225,29,38,0.4)' stroke='rgba(225,29,38,0.4)' stroke-width='0'/><rect x='2871' y='684.9' width='21.9' height='3.3' rx='1.6' fill='#e0141c'/><rect x='2877.7' y='682.2' width='8.2' height='3.5' rx='1.5' fill='#e0141c'/><rect x='2875.5' y='691.4' width='2.2' height='13.9' rx='1.1' fill='#fff'/><rect x='2880.8' y='691.4' width='2.2' height='13.9' rx='1.1' fill='#fff'/><rect x='2886.1' y='691.4' width='2.2' height='13.9' rx='1.1' fill='#fff'/></g></svg>
<div id='t0' class='t' style='left:111.0px;top:33.5px;font-size:29.26px;line-height:29.26px;font-weight:400;color:#020617;letter-spacing:-0.069px;-webkit-text-stroke:1.2px #020617'>Metro City Fire &amp; Res...</div><div id='t1' class='t' style='left:111.0px;top:70.4px;font-size:24.72px;line-height:24.72px;font-weight:400;color:#64748b;letter-spacing:0.667px;'>Department</div><div id='t2' class='t' style='left:32.0px;top:164.4px;font-size:24.72px;line-height:24.72px;font-weight:400;color:#4b5563;letter-spacing:0.702px;-webkit-text-stroke:0.7px #4b5563'>Navigation</div><div id='t3' class='t' style='left:81.0px;top:225.5px;font-size:29.26px;line-height:29.26px;font-weight:400;color:#020617;letter-spacing:-0.200px;-webkit-text-stroke:0.55px #020617'>Apparatus</div><div id='t4' class='t' style='left:79.0px;top:297.5px;font-size:29.26px;line-height:29.26px;font-weight:400;color:#020617;letter-spacing:0.143px;-webkit-text-stroke:0.55px #020617'>Hydrants</div><div id='t5' class='t' style='left:79.0px;top:369.5px;font-size:29.26px;line-height:29.26px;font-weight:400;color:#020617;letter-spacing:0.175px;-webkit-text-stroke:0.55px #020617'>Incidents</div><div id='t6' class='t' style='left:79.0px;top:441.5px;font-size:29.26px;line-height:29.26px;font-weight:400;color:#020617;letter-spacing:0.180px;-webkit-text-stroke:0.55px #020617'>Inspections</div><div id='t7' class='t' style='left:79.0px;top:513.5px;font-size:29.26px;line-height:29.26px;font-weight:400;color:#020617;letter-spacing:0.017px;-webkit-text-stroke:0.55px #020617'>Inventory</div><div id='t8' class='t' style='left:79.0px;top:585.5px;font-size:29.26px;line-height:29.26px;font-weight:400;color:#020617;letter-spacing:0.200px;-webkit-text-stroke:0.55px #020617'>Map</div><div id='t9' class='t' style='left:79.0px;top:657.5px;font-size:29.26px;line-height:29.26px;font-weight:400;color:#020617;letter-spacing:-0.317px;-webkit-text-stroke:0.55px #020617'>Personnel</div><div id='t10' class='t' style='left:79.0px;top:730.5px;font-size:29.26px;line-height:29.26px;font-weight:400;color:#020617;letter-spacing:-0.292px;-webkit-text-stroke:0.55px #020617'>Pre-Plans</div><div id='t11' class='t' style='left:80.0px;top:801.5px;font-size:29.26px;line-height:29.26px;font-weight:400;color:#0f172a;letter-spacing:0.185px;-webkit-text-stroke:0.9px #0f172a'>Schedule</div><div id='t12' class='t' style='left:80.0px;top:873.5px;font-size:29.26px;line-height:29.26px;font-weight:400;color:#020617;letter-spacing:0.042px;-webkit-text-stroke:0.55px #020617'>Stations</div><div id='t13' class='t' style='left:81.0px;top:945.5px;font-size:29.26px;line-height:29.26px;font-weight:400;color:#020617;letter-spacing:-0.269px;-webkit-text-stroke:0.55px #020617'>Training</div><div id='t14' class='t' style='left:79.0px;top:1017.5px;font-size:29.26px;line-height:29.26px;font-weight:400;color:#020617;letter-spacing:-0.180px;-webkit-text-stroke:0.55px #020617'>Manage</div><div id='t15' class='t' style='left:131.0px;top:1082.5px;font-size:29.26px;line-height:29.26px;font-weight:400;color:#020617;letter-spacing:-0.101px;-webkit-text-stroke:0.55px #020617'>Accounts</div><div id='t16' class='t' style='left:131.0px;top:1145.5px;font-size:29.26px;line-height:29.26px;font-weight:400;color:#020617;letter-spacing:0.169px;-webkit-text-stroke:0.55px #020617'>Activity</div><div id='t17' class='t' style='left:129.0px;top:1209.5px;font-size:29.26px;line-height:29.26px;font-weight:400;color:#020617;letter-spacing:0.268px;-webkit-text-stroke:0.55px #020617'>Billing</div><div id='t18' class='t' style='left:129.0px;top:1273.5px;font-size:29.26px;line-height:29.26px;font-weight:400;color:#020617;letter-spacing:0.401px;-webkit-text-stroke:0.55px #020617'>Notifications</div><div id='t19' class='t' style='left:130.0px;top:1337.5px;font-size:29.26px;line-height:29.26px;font-weight:400;color:#020617;letter-spacing:0.202px;-webkit-text-stroke:0.55px #020617'>Settings</div><div id='t20' class='t' style='left:112.0px;top:1705.5px;font-size:29.26px;line-height:29.26px;font-weight:400;color:#020617;letter-spacing:0.211px;-webkit-text-stroke:1.0px #020617'>Chief Michael Torres</div><div id='t21' class='t' style='left:112.0px;top:1741.4px;font-size:24.72px;line-height:24.72px;font-weight:400;color:#020617;letter-spacing:0.327px;-webkit-text-stroke:0.55px #020617'>demo@metrocityfire.gov</div><div id='t22' class='t' style='left:46.0px;top:1722.5px;font-size:29.26px;line-height:29.26px;font-weight:400;color:#020617;letter-spacing:-3.900px;-webkit-text-stroke:0.2px #020617'>CT</div><div id='t23' class='t' style='left:584.0px;top:137.0px;font-size:49.92px;line-height:49.92px;font-weight:400;color:#020617;letter-spacing:-0.349px;-webkit-text-stroke:1.9px #020617'>Schedule Settings</div><div id='t24' class='t' style='left:583.0px;top:200.9px;font-size:33.6px;line-height:33.6px;font-weight:400;color:#64748b;letter-spacing:-0.292px;'>Configure shift patterns, platoons, and assignments</div><div id='t25' class='t' style='left:738.0px;top:309.5px;font-size:29.26px;line-height:29.26px;font-weight:400;color:#020617;letter-spacing:0.385px;-webkit-text-stroke:0.75px #020617'>Shift Patterns</div><div id='t26' class='t' style='left:1395.0px;top:309.5px;font-size:29.26px;line-height:29.26px;font-weight:400;color:#020617;letter-spacing:0.345px;-webkit-text-stroke:0.75px #020617'>Platoons</div><div id='t27' class='t' style='left:1994.0px;top:309.5px;font-size:29.26px;line-height:29.26px;font-weight:400;color:#020617;letter-spacing:0.200px;-webkit-text-stroke:0.75px #020617'>Assignments</div><div id='t28' class='t' style='left:2641.0px;top:309.5px;font-size:29.26px;line-height:29.26px;font-weight:400;color:#020617;letter-spacing:-0.042px;-webkit-text-stroke:0.75px #020617'>Requests</div><div id='t29' class='t' style='left:2965.3px;top:296.4px;font-size:24.72px;line-height:24.72px;font-weight:700;color:#ffffff;letter-spacing:0.000px;'>2</div><div id='t30' class='t' style='left:529.0px;top:428.5px;font-size:31.68px;line-height:31.68px;font-weight:400;color:#020617;letter-spacing:1.275px;-webkit-text-stroke:1.5px #020617'>Personnel Assignments</div><div id='t31' class='t' style='left:531.0px;top:464.5px;font-size:29.26px;line-height:29.26px;font-weight:400;color:#64748b;letter-spacing:-0.074px;'>Assign personnel to platoons and positions</div><div id='t32' class='t' style='left:2704.0px;top:447.5px;font-size:29.26px;line-height:29.26px;font-weight:400;color:#ffffff;letter-spacing:0.077px;-webkit-text-stroke:0.75px #ffffff'>Add Assignment</div><div id='t33' class='t' style='left:546.0px;top:588.0px;font-size:29.26px;line-height:29.26px;font-weight:400;color:#020617;letter-spacing:0.033px;-webkit-text-stroke:0.75px #020617'>Personnel</div><div id='t34' class='t' style='left:1526.0px;top:588.0px;font-size:29.26px;line-height:29.26px;font-weight:400;color:#020617;letter-spacing:0.417px;-webkit-text-stroke:0.75px #020617'>Platoon</div><div id='t35' class='t' style='left:2083.0px;top:588.0px;font-size:29.26px;line-height:29.26px;font-weight:400;color:#020617;letter-spacing:0.767px;-webkit-text-stroke:0.75px #020617'>Effective</div><div id='t36' class='t' style='left:2767.0px;top:588.0px;font-size:29.26px;line-height:29.26px;font-weight:400;color:#020617;letter-spacing:0.167px;-webkit-text-stroke:0.75px #020617'>Actions</div><div id='t37' class='t' style='left:546.0px;top:681.5px;font-size:29.26px;line-height:29.26px;font-weight:400;color:#020617;letter-spacing:0.308px;-webkit-text-stroke:0.55px #020617'>Marcus Johnson</div><div id='t38' class='t' style='left:1566.0px;top:681.5px;font-size:29.26px;line-height:29.26px;font-weight:400;color:#020617;letter-spacing:-0.065px;-webkit-text-stroke:0.55px #020617'>B Shift</div><div id='t39' class='t' style='left:2085.0px;top:681.5px;font-size:29.26px;line-height:29.26px;font-weight:400;color:#020617;letter-spacing:1.298px;-webkit-text-stroke:0.55px #020617'>2025-09-04</div><div id='t40' class='t' style='left:546.0px;top:787.5px;font-size:29.26px;line-height:29.26px;font-weight:400;color:#020617;letter-spacing:0.270px;-webkit-text-stroke:0.55px #020617'>David Martinez</div><div id='t41' class='t' style='left:1567.0px;top:787.5px;font-size:29.26px;line-height:29.26px;font-weight:400;color:#020617;letter-spacing:-0.268px;-webkit-text-stroke:0.55px #020617'>C Shift</div><div id='t42' class='t' style='left:2085.0px;top:787.5px;font-size:29.26px;line-height:29.26px;font-weight:400;color:#020617;letter-spacing:1.298px;-webkit-text-stroke:0.55px #020617'>2025-09-04</div><div id='t43' class='t' style='left:548.0px;top:893.5px;font-size:29.26px;line-height:29.26px;font-weight:400;color:#020617;letter-spacing:-0.700px;-webkit-text-stroke:0.55px #020617'>Alex Rivera</div><div id='t44' class='t' style='left:1568.0px;top:893.5px;font-size:29.26px;line-height:29.26px;font-weight:400;color:#020617;letter-spacing:0.035px;-webkit-text-stroke:0.55px #020617'>A Shift</div><div id='t45' class='t' style='left:2085.0px;top:893.5px;font-size:29.26px;line-height:29.26px;font-weight:400;color:#020617;letter-spacing:1.298px;-webkit-text-stroke:0.55px #020617'>2025-09-04</div><div id='t46' class='t' style='left:546.0px;top:999.5px;font-size:29.26px;line-height:29.26px;font-weight:400;color:#020617;letter-spacing:0.044px;-webkit-text-stroke:0.55px #020617'>Morgan Kelly</div><div id='t47' class='t' style='left:1566.0px;top:999.5px;font-size:29.26px;line-height:29.26px;font-weight:400;color:#020617;letter-spacing:-0.065px;-webkit-text-stroke:0.55px #020617'>B Shift</div><div id='t48' class='t' style='left:2085.0px;top:999.5px;font-size:29.26px;line-height:29.26px;font-weight:400;color:#020617;letter-spacing:1.298px;-webkit-text-stroke:0.55px #020617'>2025-09-04</div><div id='t49' class='t' style='left:548.0px;top:1105.5px;font-size:29.26px;line-height:29.26px;font-weight:400;color:#020617;letter-spacing:0.000px;-webkit-text-stroke:0.55px #020617'>James Wilson</div><div id='t50' class='t' style='left:1568.0px;top:1105.5px;font-size:29.26px;line-height:29.26px;font-weight:400;color:#020617;letter-spacing:0.035px;-webkit-text-stroke:0.55px #020617'>A Shift</div><div id='t51' class='t' style='left:2085.0px;top:1105.5px;font-size:29.26px;line-height:29.26px;font-weight:400;color:#020617;letter-spacing:1.298px;-webkit-text-stroke:0.55px #020617'>2025-09-04</div><div id='t52' class='t' style='left:546.0px;top:1211.5px;font-size:29.26px;line-height:29.26px;font-weight:400;color:#020617;letter-spacing:-0.035px;-webkit-text-stroke:0.55px #020617'>Emily Rodriguez</div><div id='t53' class='t' style='left:1566.0px;top:1211.5px;font-size:29.26px;line-height:29.26px;font-weight:400;color:#020617;letter-spacing:-0.065px;-webkit-text-stroke:0.55px #020617'>B Shift</div><div id='t54' class='t' style='left:2085.0px;top:1211.5px;font-size:29.26px;line-height:29.26px;font-weight:400;color:#020617;letter-spacing:1.298px;-webkit-text-stroke:0.55px #020617'>2025-09-04</div><div id='t55' class='t' style='left:548.0px;top:1317.5px;font-size:29.26px;line-height:29.26px;font-weight:400;color:#020617;letter-spacing:0.061px;-webkit-text-stroke:0.55px #020617'>Jason Miller</div><div id='t56' class='t' style='left:1568.0px;top:1317.5px;font-size:29.26px;line-height:29.26px;font-weight:400;color:#020617;letter-spacing:0.035px;-webkit-text-stroke:0.55px #020617'>A Shift</div><div id='t57' class='t' style='left:2085.0px;top:1317.5px;font-size:29.26px;line-height:29.26px;font-weight:400;color:#020617;letter-spacing:1.298px;-webkit-text-stroke:0.55px #020617'>2025-09-04</div><div id='t58' class='t' style='left:548.0px;top:1423.5px;font-size:29.26px;line-height:29.26px;font-weight:400;color:#020617;letter-spacing:-0.250px;-webkit-text-stroke:0.55px #020617'>Amanda Foster</div><div id='t59' class='t' style='left:1566.0px;top:1423.5px;font-size:29.26px;line-height:29.26px;font-weight:400;color:#020617;letter-spacing:-0.065px;-webkit-text-stroke:0.55px #020617'>B Shift</div><div id='t60' class='t' style='left:2085.0px;top:1423.5px;font-size:29.26px;line-height:29.26px;font-weight:400;color:#020617;letter-spacing:1.298px;-webkit-text-stroke:0.55px #020617'>2025-09-04</div><div id='t61' class='t' style='left:546.0px;top:1529.5px;font-size:29.26px;line-height:29.26px;font-weight:400;color:#020617;letter-spacing:0.083px;-webkit-text-stroke:0.55px #020617'>Ryan Anderson</div><div id='t62' class='t' style='left:1566.0px;top:1529.5px;font-size:29.26px;line-height:29.26px;font-weight:400;color:#020617;letter-spacing:-0.065px;-webkit-text-stroke:0.55px #020617'>B Shift</div><div id='t63' class='t' style='left:2085.0px;top:1529.5px;font-size:29.26px;line-height:29.26px;font-weight:400;color:#020617;letter-spacing:1.298px;-webkit-text-stroke:0.55px #020617'>2025-09-04</div><div id='t64' class='t' style='left:547.0px;top:1635.5px;font-size:29.26px;line-height:29.26px;font-weight:400;color:#020617;letter-spacing:0.143px;-webkit-text-stroke:0.55px #020617'>Stephanie White</div><div id='t65' class='t' style='left:1567.0px;top:1635.5px;font-size:29.26px;line-height:29.26px;font-weight:400;color:#020617;letter-spacing:-0.268px;-webkit-text-stroke:0.55px #020617'>C Shift</div><div id='t66' class='t' style='left:2085.0px;top:1635.5px;font-size:29.26px;line-height:29.26px;font-weight:400;color:#020617;letter-spacing:1.298px;-webkit-text-stroke:0.55px #020617'>2025-09-04</div><div id='t67' class='t' style='left:547.0px;top:1741.5px;font-size:29.26px;line-height:29.26px;font-weight:400;color:#020617;letter-spacing:-0.333px;-webkit-text-stroke:0.55px #020617'>Sarah Chen</div><div id='t68' class='t' style='left:1568.0px;top:1741.5px;font-size:29.26px;line-height:29.26px;font-weight:400;color:#020617;letter-spacing:0.035px;-webkit-text-stroke:0.55px #020617'>A Shift</div><div id='t69' class='t' style='left:2085.0px;top:1741.5px;font-size:29.26px;line-height:29.26px;font-weight:400;color:#020617;letter-spacing:1.298px;-webkit-text-stroke:0.55px #020617'>2025-09-04</div>
</body></html>
